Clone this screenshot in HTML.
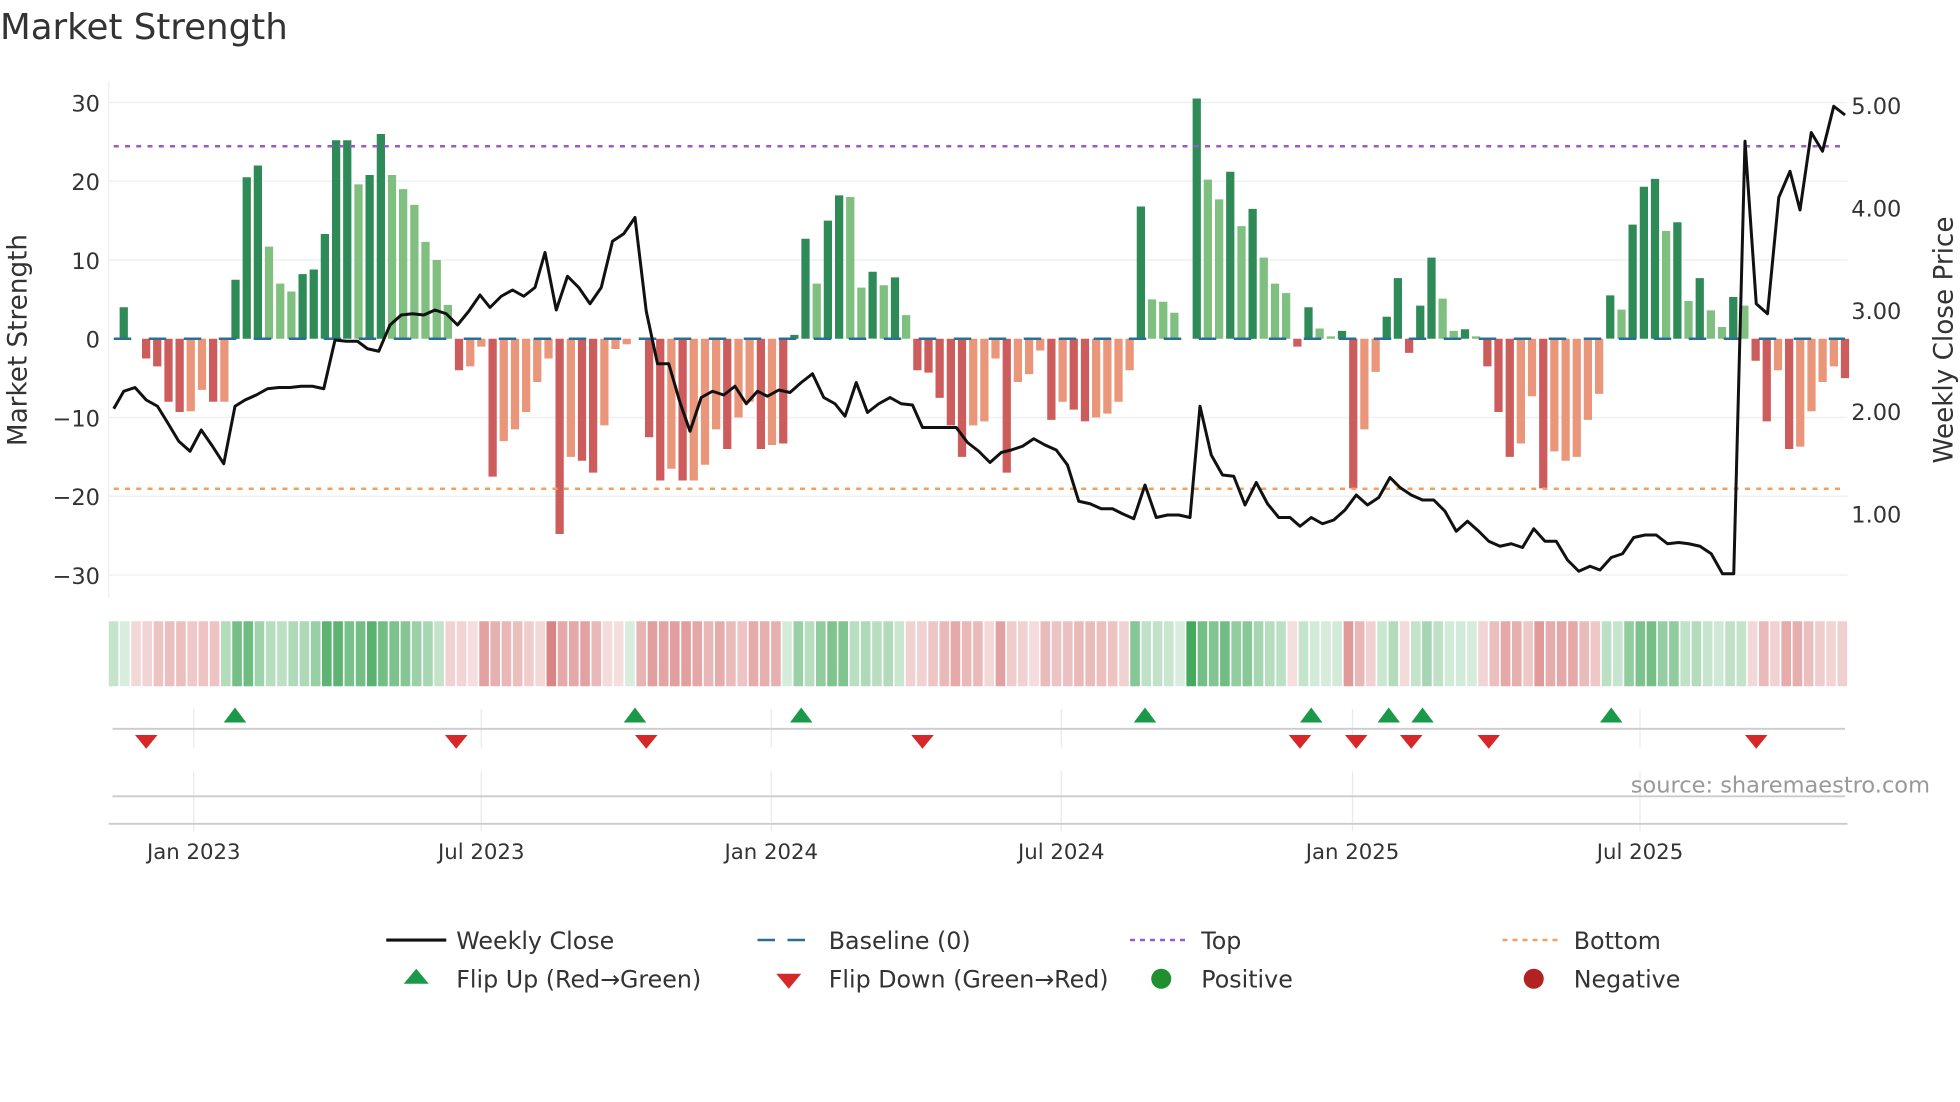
<!DOCTYPE html>
<html><head><meta charset="utf-8"><style>
html,body{margin:0;padding:0;background:#fff;width:1960px;height:1102px;overflow:hidden}
svg{display:block}
text{font-family:"DejaVu Sans","Liberation Sans",sans-serif;fill:#333}
</style></head><body>
<svg id="s" width="1960" height="1102" viewBox="0 0 1568 881.6" xmlns="http://www.w3.org/2000/svg">
<text x="0" y="31" font-size="28.5">Market Strength</text>
<g stroke="#eef0f4" stroke-width="1.2">
<line x1="87" x2="1478" y1="82" y2="82"/><line x1="87" x2="1478" y1="145" y2="145"/><line x1="87" x2="1478" y1="208" y2="208"/><line x1="87" x2="1478" y1="334" y2="334"/><line x1="87" x2="1478" y1="397" y2="397"/><line x1="87" x2="1478" y1="460" y2="460"/>
<line x1="87" x2="87" y1="65" y2="478"/>
</g>
<g font-size="18" text-anchor="end">
<text x="80" y="89">30</text><text x="80" y="152">20</text><text x="80" y="215">10</text><text x="80" y="278">0</text><text x="80" y="341">−10</text><text x="80" y="404">−20</text><text x="80" y="467">−30</text>
</g>
<g font-size="18">
<text x="1481" y="91">5.00</text><text x="1481" y="173">4.00</text><text x="1481" y="255">3.00</text><text x="1481" y="336">2.00</text><text x="1481" y="418">1.00</text>
</g>
<text transform="translate(21,272) rotate(-90)" font-size="21" text-anchor="middle">Market Strength</text>
<text transform="translate(1562,272) rotate(-90)" font-size="21" text-anchor="middle">Weekly Close Price</text>
<g id="bars"></g>
<line x1="91" x2="1476" y1="271" y2="271" stroke="#2a6f97" stroke-width="2" stroke-dasharray="14,14"/>
<line x1="91" x2="1476" y1="117" y2="117" stroke="#9b59d0" stroke-width="2" stroke-dasharray="4,5"/>
<line x1="91" x2="1476" y1="391" y2="391" stroke="#f0a060" stroke-width="2" stroke-dasharray="4,5"/>
<polyline id="pl" fill="none" stroke="#111" stroke-width="2.4" stroke-linejoin="round"/>
<g id="heat"></g>
<g stroke="#e8eaee" stroke-width="1">
<line x1="155" x2="155" y1="567" y2="598"/><line x1="385" x2="385" y1="567" y2="598"/><line x1="617" x2="617" y1="567" y2="598"/><line x1="849" x2="849" y1="567" y2="598"/><line x1="1082" x2="1082" y1="567" y2="598"/><line x1="1312" x2="1312" y1="567" y2="598"/>
<line x1="155" x2="155" y1="617" y2="665"/><line x1="385" x2="385" y1="617" y2="665"/><line x1="617" x2="617" y1="617" y2="665"/><line x1="849" x2="849" y1="617" y2="665"/><line x1="1082" x2="1082" y1="617" y2="665"/><line x1="1312" x2="1312" y1="617" y2="665"/>
</g>
<line x1="90" x2="1476" y1="583" y2="583" stroke="#ccc" stroke-width="1.5"/>
<line x1="90" x2="1476" y1="637" y2="637" stroke="#ccc" stroke-width="1.5"/>
<line x1="87" x2="1478" y1="659" y2="659" stroke="#ccc" stroke-width="1.5"/>
<g id="mk"></g>
<text x="1544" y="634" font-size="18" fill="#999" style="fill:#999" text-anchor="end">source: sharemaestro.com</text>
<g font-size="17" text-anchor="middle">
<text x="155" y="687">Jan 2023</text><text x="385" y="687">Jul 2023</text><text x="617" y="687">Jan 2024</text><text x="849" y="687">Jul 2024</text><text x="1082" y="687">Jan 2025</text><text x="1312" y="687">Jul 2025</text>
</g>
<g font-size="19">
<line x1="309" x2="357" y1="752" y2="752" stroke="#111" stroke-width="2.5"/><text x="365" y="759">Weekly Close</text>
<line x1="606" x2="654" y1="752" y2="752" stroke="#2a6f97" stroke-width="2" stroke-dasharray="14,10"/><text x="663" y="759">Baseline (0)</text>
<line x1="904" x2="950" y1="752" y2="752" stroke="#9b59d0" stroke-width="2" stroke-dasharray="4,4"/><text x="961" y="759">Top</text>
<line x1="1202" x2="1248" y1="752" y2="752" stroke="#f0a060" stroke-width="2" stroke-dasharray="4,4"/><text x="1259" y="759">Bottom</text>
<polygon points="323,787 343,787 333,775" fill="#1a9a48"/><text x="365" y="790">Flip Up (Red→Green)</text>
<polygon points="621,779 641,779 631,791" fill="#d62828"/><text x="663" y="790">Flip Down (Green→Red)</text>
<circle cx="929" cy="783" r="8" fill="#1f8f2f"/><text x="961" y="790">Positive</text>
<circle cx="1227" cy="783" r="8" fill="#b22222"/><text x="1259" y="790">Negative</text>
</g>
</svg>
<script>
var v=[["d",4],0,["d",-2.5],["d",-3.5],["d",-8],["d",-9.3],["l",-9.2],["l",-6.5],["d",-8],["l",-8],
["d",7.5],["d",20.5],["d",22],["l",11.7],["l",7],["l",6],["d",8.2],["d",8.8],["d",13.3],["d",25.2],["d",25.2],["l",19.6],["d",20.8],["d",26],["l",20.8],["l",19],["l",17],["l",12.3],["l",10],["l",4.3],
["d",-4],["l",-3.5],["l",-1],["d",-17.5],["l",-13],["l",-11.5],["l",-9.3],["l",-5.5],["l",-2.5],["d",-24.8],["l",-15],["d",-15.5],["d",-17],["l",-11],["l",-1.3],["l",-0.7],0,
["d",-12.5],["d",-18],["l",-16.5],["d",-18],["l",-18],["l",-16],["l",-11.5],["d",-14],["l",-10],["l",-8],["d",-14],["l",-13.5],["d",-13.3],
["d",0.5],["d",12.7],["l",7],["d",15],["d",18.2],["l",18],["l",6.5],["d",8.5],["l",6.8],["d",7.8],["l",3],
["d",-4],["d",-4.3],["d",-7.5],["d",-11],["d",-15],["l",-11],["l",-10.5],["l",-2.5],["d",-17],["l",-5.5],["l",-4.5],["l",-1.5],["d",-10.3],["l",-8],["d",-9],["d",-10.5],["l",-10],["l",-9.5],["l",-8],["l",-4],
["d",16.8],["l",5],["l",4.7],["l",3.3],0,["d",30.5],["l",20.2],["l",17.7],["d",21.2],["l",14.3],["d",16.5],["l",10.3],["l",7],["l",5.8],["d",-1],["d",4],["l",1.3],["l",0.3],["d",1],
["d",-19],["l",-11.5],["l",-4.2],["d",2.8],["d",7.7],["d",-1.8],["d",4.2],["d",10.3],["l",5.1],["l",1],["d",1.2],["l",0.3],
["d",-3.5],["d",-9.3],["d",-15],["l",-13.3],["l",-7.3],["d",-19],["l",-14.3],["l",-15.5],["l",-15],["l",-10.3],["l",-7],
["d",5.5],["l",3.7],["d",14.5],["d",19.3],["d",20.3],["l",13.7],["d",14.8],["l",4.8],["d",7.7],["l",3.6],["l",1.5],["d",5.3],["l",4.2],
["d",-2.8],["d",-10.5],["l",-4],["d",-14],["l",-13.7],["l",-9.2],["l",-5.5],["l",-3.5],["d",-5]];
var n=v.length,x0=99,step=(1476-99)/(n-1),b="",h="",hs=(1479-87)/n;
for(var i=0;i<n;i++){var e=v[i],x=x0+i*step;var val=e?e[1]:0,t=e?e[0]:"l";
if(val!=0){var c=val>0?(t=="d"?"#2e8b57":"#7fbf7f"):(t=="d"?"#cd5c5c":"#e9967a");var y=271-val*6.3;
b+='<rect x="'+(x-3.3).toFixed(1)+'" y="'+Math.min(y,271).toFixed(1)+'" width="6.6" height="'+Math.abs(val*6.3).toFixed(1)+'" fill="'+c+'"/>';}
var a=0.2+Math.min(Math.abs(val),30)/30*0.75;var hc=val>=0?"rgba(60,165,85,"+a.toFixed(2)+")":"rgba(205,90,90,"+(a*0.9).toFixed(2)+")";
h+='<rect x="'+(87+i*hs).toFixed(1)+'" y="497" width="'+(hs-1.3).toFixed(1)+'" height="52" fill="'+hc+'"/>';}
document.getElementById("bars").innerHTML=b;document.getElementById("heat").innerHTML=h;
document.getElementById("pl").setAttribute("points","91,327 99,313 108,310 117,320 126,325 134,338 143,353 152,361 161,344 170,357 179,371 188,325 196,320 205,316 214,311 223,310 232,310 241,309 250,309 259,311 268,272 277,273 286,273 294,279 303,281 312,260 321,252 330,251 339,252 348,248 357,251 366,260 375,249 384,236 392,246 401,237 410,232 419,237 428,230 436,202 445,248 454,221 463,230 472,243 481,230 490,193 499,187 508,174 517,249 526,291 535,291 544,322 552,345 561,318 570,313 579,316 588,309 597,323 606,313 614,317 623,312 632,314 641,306 650,299 659,318 668,323 676,333 685,306 694,330 703,323 712,318 721,323 730,324 738,342 747,342 756,342 765,342 774,354 783,361 792,370 801,362 809,360 818,357 827,351 836,356 845,360 854,372 863,401 872,403 881,407 890,407 898,411 907,415 916,388 925,414 934,412 943,412 952,414 960,325 969,364 978,380 987,381 996,404 1005,386 1014,403 1023,414 1032,414 1040,421 1049,414 1058,419 1067,416 1076,408 1085,396 1094,404 1103,398 1112,382 1120,390 1129,396 1138,400 1147,400 1156,409 1165,425 1174,417 1183,425 1191,433 1200,437 1209,435 1218,438 1227,423 1236,433 1245,433 1254,448 1263,457 1272,453 1280,456 1289,446 1298,443 1307,430 1316,428 1325,428 1334,435 1343,434 1351,435 1360,437 1369,443 1378,459 1387,459 1396,113 1405,243 1414,251 1423,158 1432,137 1440,168 1449,106 1458,121 1467,85 1476,92");
var m="";[188,508,641,916,1049,1111,1138,1289].forEach(function(x){m+='<polygon points="'+(x-9)+',578 '+(x+9)+',578 '+x+',566" fill="#1a9a48"/>';});
[117,365,517,738,1040,1085,1129,1191,1405].forEach(function(x){m+='<polygon points="'+(x-9)+',588 '+(x+9)+',588 '+x+',599" fill="#d62828"/>';});
document.getElementById("mk").innerHTML=m;
</script>
</body></html>
